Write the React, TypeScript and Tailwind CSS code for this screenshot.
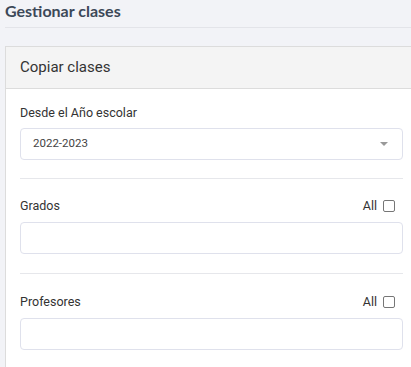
import React from "react";

function Field({ label, withAll }: { label: string; withAll?: boolean }) {
  return (
    <div>
      <div className="flex items-center justify-between h-[16px]">
        <span className="text-[12.5px] text-[#333]">{label}</span>
        {withAll && (
          <span className="flex items-center gap-[6px] mr-[8px]">
            <span className="text-[12.5px] text-[#333]">All</span>
            <span className="w-[12px] h-[12px] border border-[#767676] rounded-[2px] bg-white" />
          </span>
        )}
      </div>
      <div className="mt-[8px] h-[32px] border border-[#dfe1ec] rounded-[4px] bg-white" />
    </div>
  );
}

export default function App() {
  return (
    <div
      className="w-[411px] h-[367px] overflow-hidden bg-[#f2f3f7]"
      style={{ fontFamily: "Roboto, 'Liberation Sans', sans-serif" }}
    >
      <div className="pl-[5px]">
        <div className="h-[28px] border-b border-[#e3e4e9] flex items-start">
          <h1
            className="text-[16px] font-bold text-[#3c4858] leading-[22px]"
            style={{ fontFamily: "Lato, 'Open Sans', sans-serif" }}
          >
            Gestionar clases
          </h1>
        </div>
        <div className="mt-[18px] w-[413px] border border-[#dcdcdc] bg-white">
          <div className="h-[42px] bg-[#f4f4f4] border-b border-[#dcdcdc] flex items-center px-[14px]">
            <span className="text-[15px] text-[#333]">Copiar clases</span>
          </div>
          <div className="px-[14px] pt-[16px] pb-[20px]">
            <div className="flex items-center h-[16px]">
              <span className="text-[12.5px] text-[#333]">Desde el Año escolar</span>
            </div>
            <div className="mt-[7px] h-[32px] border border-[#dfe1ec] rounded-[4px] bg-white flex items-center justify-between pl-[12px] pr-[14px]">
              <span className="text-[11.5px] text-[#444]">2022-2023</span>
              <svg width="8" height="4" viewBox="0 0 8 4">
                <path d="M0 0 L8 0 L4 4 Z" fill="#999" />
              </svg>
            </div>
            <div className="mt-[18px] border-t border-[#e6e7eb]" />
            <div className="mt-[19px]">
              <Field label="Grados" withAll />
            </div>
            <div className="mt-[19px] border-t border-[#e6e7eb]" />
            <div className="mt-[20px]">
              <Field label="Profesores" withAll />
            </div>
          </div>
        </div>
      </div>
    </div>
  );
}
